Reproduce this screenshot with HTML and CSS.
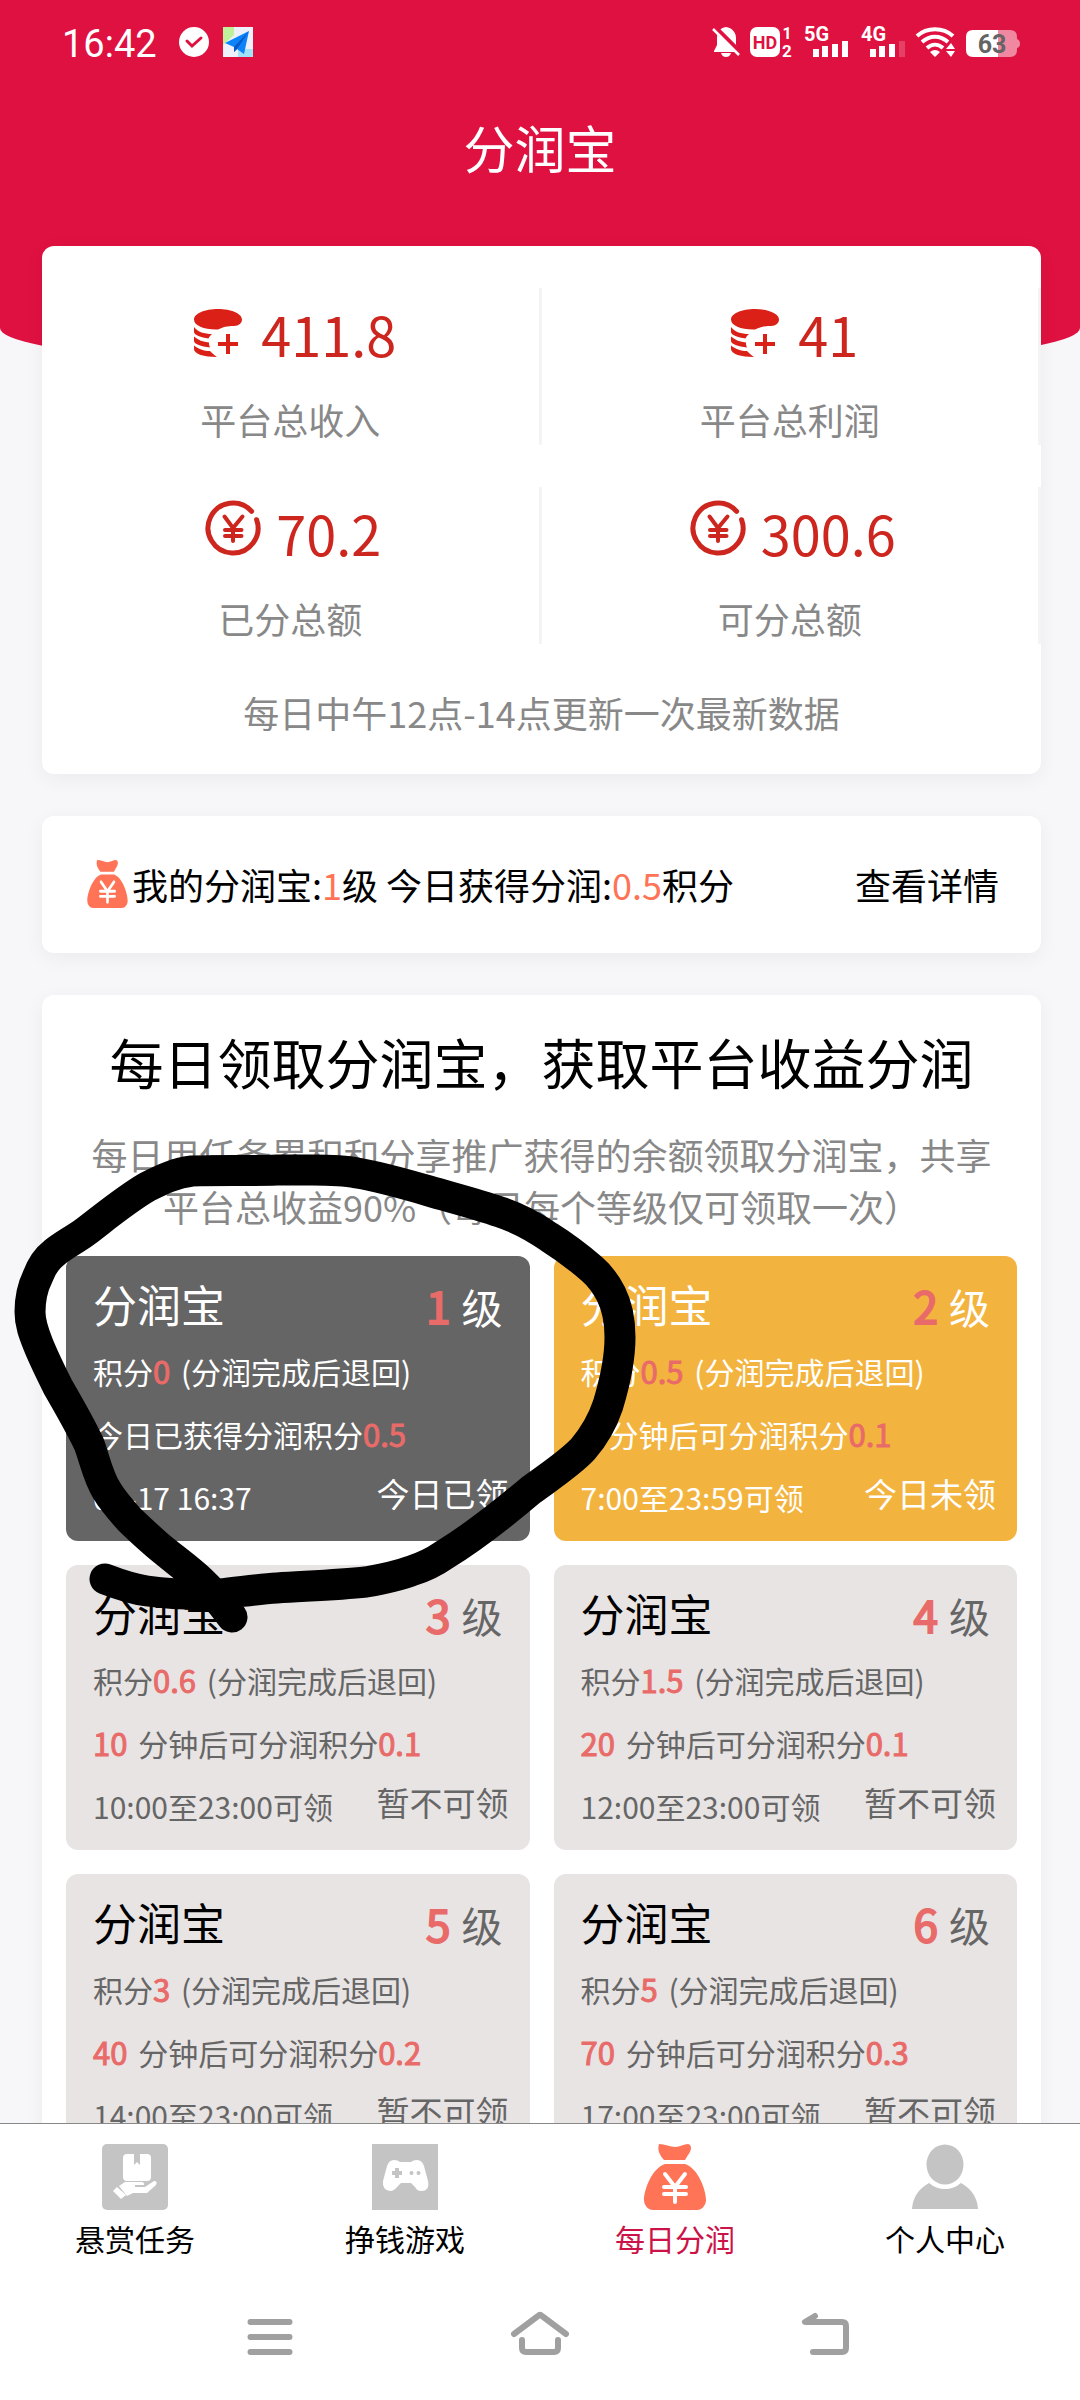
FILE: index.html
```html
<!DOCTYPE html>
<html lang="zh-CN">
<head>
<meta charset="utf-8">
<meta name="viewport" content="width=device-width, initial-scale=1">
<title>分润宝</title>
<link rel="stylesheet" href="styles.css">
</head>
<body>
<svg class="defs" width="0" height="0" aria-hidden="true">
  <symbol id="coins" viewBox="0 0 56 56">
    <path d="M28 8C41 8 52 12.500 52 18.500C52 22 49 25 44 25C37 25 33 26 28 28.500C15 29 4 25 4 18.500C4 12.500 15 8 28 8Z"/>
    <path d="M4 26C8 31 14 33 22 33C20 35 19 36 18.500 37.500C11 36.500 4 34 4 31Z"/>
    <path d="M4 35.500C8 39 13 41 19 41.500C19 43 19.200 45 20 46.500C11 45.500 4 43 4 40Z"/>
    <path d="M4 44.500C8 48 14 50 20 50C22 52 24 54 27 56C14 56 4 53 4 48Z"/>
    <path d="M36 33h4v8h8v4h-8v8h-4v-8h-8v-4h8z"/>
  </symbol>
  <symbol id="yen" viewBox="0 0 56 56">
    <g fill="none" stroke="currentColor" stroke-linecap="round">
      <path stroke-width="5" d="M46.600 11.300A25 25 0 1 0 51.600 19.700"/>
      <path stroke-width="4" d="M19.500 16.500L28 28L37.500 16.500M28 28V41M20 30H36.500M20 36H36.500"/>
    </g>
  </symbol>
  <symbol id="bag" viewBox="0 0 66 66" preserveAspectRatio="none">
    <path fill="#ff7357" d="M17 0C23 0 28 3 33 3C38 3 42 0 46 0C50 1 50 6 46 11L43 16H22C18 11 15 7 17 0ZM23 20H43C56 24 64 46 64 56C64 61 60 66 55 66H11C6 66 2 61 2 56C2 46 10 24 23 20Z"/>
    <path fill="none" stroke="#fff" stroke-width="4" stroke-linecap="round" d="M23 30L33 43L43 30M33 43V58M22 43H44M22 50H44"/>
  </symbol>
</svg>

<div class="app">
  <main class="screen">
    <header class="header">
      <div class="status">
        <span class="clock">16:42</span>
        <svg width="30" height="30" viewBox="0 0 30 30" aria-hidden="true"><circle cx="15" cy="15" r="15" fill="#fff"/><path d="M8 14L13 19L22 11" fill="none" stroke="#df1140" stroke-width="3" stroke-linecap="round"/></svg>
        <svg width="30" height="30" viewBox="0 0 30 30" aria-hidden="true"><path fill="#eef0fa" d="M0 0H30V30H0Z"/><path fill="#bff09a" d="M0 0H11V8L0 18Z"/><path fill="#9fe4f8" d="M15 30V22H30V30Z"/><path fill="#0b83fb" d="M26 4L21 27L14 22L11 25V20L2 16Z"/><path fill="#0757c4" d="M26 4L11 20V25L14 22Z"/></svg>
        <span class="spacer"></span>
        <svg width="28" height="30" viewBox="0 0 28 30" aria-hidden="true"><path fill="#fff" d="M14 0C20 1 24 5 24 11V18L27 24V25H2V24L5 18V11C5 5 8 1 14 0ZM9 26H19C18 29 16 30 14 30C12 30 10 29 9 26Z"/><path stroke="#df1140" stroke-width="6" d="M2 0L28 26"/><path stroke="#fff" stroke-width="2.500" d="M1 2L27 28"/></svg>
        <svg width="44" height="30" viewBox="0 0 44 30" aria-hidden="true"><rect width="30" height="30" rx="7" fill="#fff"/><text x="15" y="22" text-anchor="middle" class="s-bold" font-size="18" fill="#df1140">HD</text><text x="37" y="12" text-anchor="middle" class="s-bold" font-size="16">1</text><text x="37" y="30" text-anchor="middle" class="s-bold" font-size="17">2</text></svg>
        <svg width="47" height="30" viewBox="0 0 47 30" aria-hidden="true"><text x="0" y="14" class="s-bold" font-size="20">5G</text><path fill="#fff" d="M9 22h6v8h-6zM18 19h6v11h-6zM28 17h6v13h-6zM38 14h6v16h-6z"/></svg>
        <svg width="45" height="30" viewBox="0 0 45 30" aria-hidden="true"><text x="0" y="14" class="s-bold" font-size="20">4G</text><path fill="#fff" d="M9 22h6v8h-6zM18 19h6v11h-6zM28 17h6v13h-6z"/><path fill="#fff" opacity=".2" d="M38 14h6v16h-6z"/></svg>
        <svg width="40" height="30" viewBox="0 0 40 30" aria-hidden="true"><g fill="none" stroke="#fff" stroke-width="4"><path d="M1 9C11 0 27 0 37 9"/><path d="M6 15C14 8 24 8 32 15"/><path d="M11 21C16 16.500 22 16.500 27 21"/></g><path fill="#fff" d="M14 25Q19 21 24 25L19 30ZM30 22L35 16L39 22ZM30 24H39L35 30Z"/></svg>
        <svg width="54" height="30" viewBox="0 0 54 30" aria-hidden="true"><path fill="#fff" d="M7 3H32V30H7Q0 30 0 23V10Q0 3 7 3Z"/><path fill="#fff" opacity=".5" d="M32 3H44Q51 3 51 10V12Q54 13 54 17Q54 20 51 21V23Q51 30 44 30H32Z"/><text x="26" y="26" text-anchor="middle" class="s-bold" font-size="25" fill="#646464">63</text></svg>
      </div>
      <h1 class="title">分润宝</h1>
    </header>

    <div class="content">
      <section class="card stats">
        <dl class="stat-grid">
          <div class="stat"><dt>平台总收入</dt><dd><svg width="56" height="56" aria-hidden="true"><use href="#coins"/></svg>411.8</dd></div>
          <div class="stat"><dt>平台总利润</dt><dd><svg width="56" height="56" aria-hidden="true"><use href="#coins"/></svg>41</dd></div>
          <div class="stat"><dt>已分总额</dt><dd><svg width="56" height="56" aria-hidden="true"><use href="#yen"/></svg>70.2</dd></div>
          <div class="stat"><dt>可分总额</dt><dd><svg width="56" height="56" aria-hidden="true"><use href="#yen"/></svg>300.6</dd></div>
        </dl>
        <p class="note">每日中午12点-14点更新一次最新数据</p>
      </section>

      <section class="card mine">
        <svg class="mine-icon" width="43" height="48" aria-hidden="true"><use href="#bag"/></svg>
        <p class="mine-text">我的分润宝:<span class="accent">1</span>级 今日获得分润:<span class="accent">0.5</span>积分</p>
        <a class="detail" href="#detail">查看详情</a>
      </section>

      <section class="card claim">
        <h2 class="claim-title">每日领取分润宝，获取平台收益分润</h2>
        <p class="claim-text">每日用任务累积和分享推广获得的余额领取分润宝，共享平台总收益90%（每日每个等级仅可领取一次）</p>
        <div class="levels">
          <article class="level done">
            <div class="level-head"><h3>分润宝</h3><span class="rank"><b>1</b> 级</span></div>
            <p>积分<b>0</b><span class="after"> (分润完成后退回)</span></p>
            <p>今日已获得分润积分<b>0.5</b></p>
            <div class="level-foot"><p>06-17 16:37</p><span class="state">今日已领</span></div>
          </article>
          <article class="level open">
            <div class="level-head"><h3>分润宝</h3><span class="rank"><b>2</b> 级</span></div>
            <p>积分<b>0.5</b><span class="after"> (分润完成后退回)</span></p>
            <p><b>5</b><span class="after"> 分钟后可分润积分</span><b>0.1</b></p>
            <div class="level-foot"><p>7:00至23:59可领</p><span class="state">今日未领</span></div>
          </article>
          <article class="level">
            <div class="level-head"><h3>分润宝</h3><span class="rank"><b>3</b> 级</span></div>
            <p>积分<b>0.6</b><span class="after"> (分润完成后退回)</span></p>
            <p><b>10</b><span class="after"> 分钟后可分润积分</span><b>0.1</b></p>
            <div class="level-foot"><p>10:00至23:00可领</p><span class="state">暂不可领</span></div>
          </article>
          <article class="level">
            <div class="level-head"><h3>分润宝</h3><span class="rank"><b>4</b> 级</span></div>
            <p>积分<b>1.5</b><span class="after"> (分润完成后退回)</span></p>
            <p><b>20</b><span class="after"> 分钟后可分润积分</span><b>0.1</b></p>
            <div class="level-foot"><p>12:00至23:00可领</p><span class="state">暂不可领</span></div>
          </article>
          <article class="level">
            <div class="level-head"><h3>分润宝</h3><span class="rank"><b>5</b> 级</span></div>
            <p>积分<b>3</b><span class="after"> (分润完成后退回)</span></p>
            <p><b>40</b><span class="after"> 分钟后可分润积分</span><b>0.2</b></p>
            <div class="level-foot"><p>14:00至23:00可领</p><span class="state">暂不可领</span></div>
          </article>
          <article class="level">
            <div class="level-head"><h3>分润宝</h3><span class="rank"><b>6</b> 级</span></div>
            <p>积分<b>5</b><span class="after"> (分润完成后退回)</span></p>
            <p><b>70</b><span class="after"> 分钟后可分润积分</span><b>0.3</b></p>
            <div class="level-foot"><p>17:00至23:00可领</p><span class="state">暂不可领</span></div>
          </article>
        </div>
      </section>
    </div>

    <svg class="marker" width="660" height="500" viewBox="0 1150 660 500" aria-hidden="true">
      <path d="M105 1579C118 1584 132 1589 147 1591C170 1594 195 1595 219 1594C240 1592 258 1589 277 1588C308 1586 338 1585 366 1582C383 1579 398 1576 411 1571C424 1567 434 1562 444 1555C475 1536 505 1512 531 1490C550 1476 570 1463 583 1449C595 1435 603 1420 608 1405C615 1382 620 1360 620 1337C620 1322 617 1306 611 1294C606 1284 600 1276 592 1269C578 1257 565 1247 549 1237C533 1226 518 1218 500 1212C477 1204 453 1198 429 1191C405 1184 381 1177 357 1173C342 1170 327 1170 312 1170H277C248 1171 220 1170 192 1171C175 1173 161 1180 147 1187C125 1200 106 1216 85 1232C74 1240 62 1246 54 1253C45 1260 41 1268 38 1276C32 1288 30 1300 30 1312C30 1324 34 1334 38 1344C44 1359 51 1373 58 1387C69 1406 80 1425 89 1444C95 1460 98 1477 107 1491C113 1501 121 1510 129 1519C138 1528 147 1536 156 1544C171 1557 187 1568 201 1581C213 1592 223 1605 232 1617" fill="none" stroke="#000" stroke-width="31" stroke-linecap="round" stroke-linejoin="round"/>
    </svg>
  </main>

  <nav class="tabs">
    <a class="tab" href="#tasks">
      <svg width="66" height="66" viewBox="0 0 66 66" aria-hidden="true"><rect width="66" height="66" rx="5" fill="#c4c4c4"/><path fill="#fff" d="M25 10H32V21L35 18L38 21V10H45Q49 10 49 14V33Q49 37 45 37H25Q21 37 21 33V14Q21 10 25 10ZM17 42L23 38H40Q43 39 42 41H33V43H43L52 37Q56 37 54 41L45 49H31L25 52ZM15 43L24 51L19 55L11 47Z"/></svg>
      悬赏任务</a>
    <a class="tab" href="#games">
      <svg width="66" height="66" viewBox="0 0 66 66" aria-hidden="true"><path fill="#c4c4c4" d="M0 0H66V66H0Z"/><path fill="#fff" d="M22 16Q26 16 28 18H39Q41 16 45 16Q50 16 52 22L56 37Q58 47 49 47Q45 47 43 43L39 39H29L25 43Q22 47 18 47Q10 46 11 37L15 22Q17 16 22 16Z"/><path stroke="#c4c4c4" stroke-width="4" d="M20 29H30M25 24V34"/><circle cx="39.500" cy="29" r="2" fill="#c4c4c4"/><circle cx="46.500" cy="29" r="2" fill="#c4c4c4"/></svg>
      挣钱游戏</a>
    <a class="tab active" href="#share" aria-current="page">
      <svg width="66" height="66" aria-hidden="true"><use href="#bag"/></svg>
      每日分润</a>
    <a class="tab" href="#me">
      <svg width="66" height="66" viewBox="0 0 66 66" aria-hidden="true"><g fill="#c4c4c4"><ellipse cx="33" cy="20.500" rx="18.500" ry="20"/><path d="M0 65Q1 48 17 39Q24 45 33 45Q42 45 49 39Q65 48 66 65Z"/></g></svg>
      个人中心</a>
  </nav>

  <div class="system">
    <button type="button" aria-label="菜单"><svg width="80" height="50" viewBox="0 0 80 50"><path d="M20.500 10H59.500M20.500 25H59.500M20.500 40H59.500"/></svg></button>
    <button type="button" aria-label="主页"><svg width="80" height="50" viewBox="0 0 80 50"><path d="M14 22L38 4Q40 2 42 4L66 22M22 28V36Q22 40 26 40H54Q58 40 58 36V28"/></svg></button>
    <button type="button" aria-label="返回"><svg width="80" height="50" viewBox="0 0 80 50"><path d="M45 4L35 10H72Q76 10 76 14V36Q76 40 72 40H43"/></svg></button>
  </div>
</div>
</body>
</html>
```

FILE: styles.css
```css
* {
  box-sizing: border-box;
  margin: 0;
  padding: 0;
}

body {
  font-family: "Noto Sans CJK SC", "Noto Sans", sans-serif;
  font-size: 36px;
  line-height: 52px;
  color: #000;
  background: #f7f7fa;
}

a {
  color: inherit;
  text-decoration: none;
}

svg {
  display: block;
  flex: none;
  overflow: visible;
}

.defs {
  position: absolute;
}

.app {
  display: flex;
  flex-direction: column;
  height: 100vh;
}

.screen {
  position: relative;
  z-index: 0;
  flex: 1;
  min-height: 0;
  overflow-x: hidden;
  overflow-y: auto;
  scrollbar-width: none;
}

/* Header: the red backdrop reaches down behind the first card */
.header {
  color: #fff;
}

.header::before {
  content: "";
  position: absolute;
  z-index: -1;
  top: 0;
  left: 0;
  right: 0;
  height: 374px;
  background: #df1140;
  border-radius: 0 0 50% 50% / 0 0 46px 46px;
}

.status {
  display: flex;
  align-items: center;
  gap: 10px;
  height: 84px;
  padding: 0 60px;
}

.clock {
  font: 38px/44px Roboto, sans-serif;
  margin: 4px 12px 0 2px;
}

.clock + svg {
  margin-right: 4px;
}

.spacer {
  flex: 1;
}

.s-bold {
  font-family: Roboto, sans-serif;
  font-weight: 700;
}

.s-bold:not([fill]) {
  fill: #fff;
}

.title {
  font-size: 51px;
  font-weight: 400;
  line-height: 126px;
  text-align: center;
}

.content {
  display: flex;
  flex-direction: column;
  gap: 42px;
  padding: 36px 39px 42px 42px;
}

.card {
  background: #fff;
  border-radius: 12px;
  box-shadow: 0 5px 20px rgba(0, 0, 0, 0.05);
}

.stat-grid {
  display: grid;
  grid-template-columns: 1fr 1fr;
  row-gap: 42px;
  padding-top: 42px;
}

.stat {
  display: flex;
  flex-direction: column;
  gap: 26px;
  padding-top: 13px;
  text-align: center;
  border-right: 3px solid #f4f4f4;
}

.stat dd {
  display: flex;
  order: -1;
  align-items: baseline;
  justify-content: center;
  gap: 15px;
  height: 66px;
  padding-left: 6px;
  font-size: 54px;
  line-height: 66px;
  color: #cd261f;
}

.stat svg {
  fill: #da2017;
}

.stat dt,
.note,
.claim-text {
  color: #888;
}

.note {
  padding: 42px 24px 36px;
  text-align: center;
}

.mine {
  display: flex;
  align-items: center;
  padding: 42px 42px 43px 44px;
}

.mine-icon {
  margin-right: 3px;
}

.mine-text {
  flex: 1;
}

.accent {
  color: #ff7357;
}

.claim {
  padding: 29px 24px 24px;
}

.claim-title {
  font-size: 54px;
  font-weight: 400;
  line-height: 76px;
  text-align: center;
}

.claim-text {
  padding: 28px 24px 24px;
  text-align: center;
}

.levels {
  display: grid;
  grid-template-columns: 1fr 1fr;
  gap: 24px;
}

.level {
  padding: 20px 21px 12px 27px;
  font-size: 30px;
  line-height: 63px;
  color: #666;
  background: #e8e4e4;
  border-radius: 12px;
}

.level h3 {
  font-size: 44px;
  font-weight: 400;
  line-height: 56px;
  color: #000;
}

/* Figures keep the regular width and are thickened by an outline */
.level b {
  font-size: 31px;
  font-weight: 400;
  line-height: 52px;
  color: #e96b69;
  -webkit-text-stroke: 1px #e96b69;
}

.level.done,
.level.open,
.level.done h3,
.level.open h3 {
  color: #fff;
}

.level.done {
  background: #656565;
}

.level.open {
  background: #f3b43f;
}

.level-head {
  display: flex;
  justify-content: space-between;
  align-items: flex-start;
  height: 56px;
  margin-bottom: 8px;
  padding-right: 6px;
}

.rank {
  font-size: 41px;
  line-height: 60px;
}

.level .rank b {
  font-size: 44px;
  line-height: 56px;
  margin-right: 2px;
  -webkit-text-stroke-width: 2px;
}

.after {
  margin-left: 4px;
}

.level-foot {
  display: flex;
  justify-content: space-between;
  align-items: flex-start;
}

.state {
  font-size: 33px;
  line-height: 54px;
}

/* Hand-drawn marker loop over the first level */
.marker {
  position: absolute;
  top: 1150px;
  left: 0;
  pointer-events: none;
}

.tabs {
  display: grid;
  grid-template-columns: repeat(4, 1fr);
  padding: 20px 0 15px;
  background: #fff;
  border-top: 1px solid #888;
}

.tab {
  display: flex;
  flex-direction: column;
  align-items: center;
  gap: 7px;
  font-size: 30px;
  line-height: 42px;
}

.tab.active {
  color: #cc1348;
}

.system {
  display: flex;
  align-items: center;
  justify-content: space-between;
  height: 126px;
  padding: 0 230px;
  background: #fff;
}

.system button {
  background: none;
  border: 0;
}

.system svg {
  fill: none;
  stroke: #a0a0a0;
  stroke-width: 6px;
  stroke-linecap: round;
  stroke-linejoin: round;
}
```
